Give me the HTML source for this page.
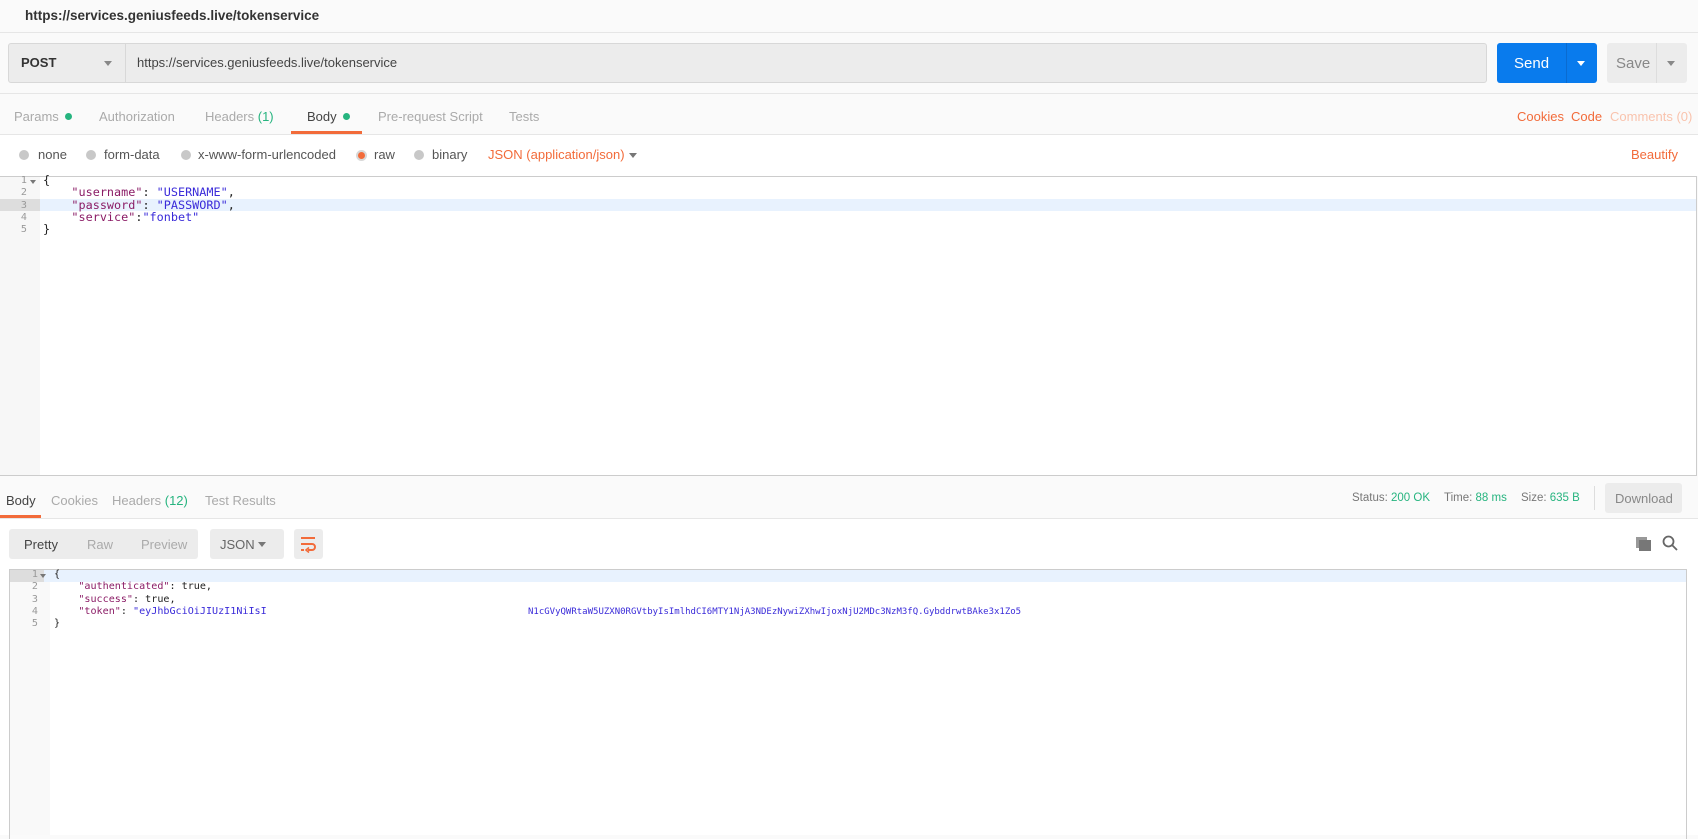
<!DOCTYPE html>
<html><head><meta charset="utf-8"><style>
*{box-sizing:border-box;margin:0;padding:0}
body{width:1698px;height:835px;overflow:hidden;background:#fafafa;font-family:"Liberation Sans",sans-serif;font-size:13px;color:#505050;position:relative}
.a{position:absolute;white-space:nowrap}
.mono{font-family:"DejaVu Sans Mono","Liberation Mono",monospace;font-size:10.1px;line-height:12.3px}
.m2{font-size:11.8px}
.k{color:#8b1c66}.s{color:#3a2bd9}
.dot{display:inline-block;width:7px;height:7px;border-radius:50%;background:#26b47f;margin-left:6px;vertical-align:1px}
.g{color:#26b47f}.o{color:#f26b3a}
.radio{position:absolute;width:10px;height:10px;border-radius:50%;background:#c8c8c8;top:150px}
</style></head><body>
<div class="a" style="left:0;top:0;width:1698px;height:33px;border-bottom:1px solid #e6e6e6;background:#fafafa"></div>
<div class="a" style="left:25px;top:8px;font-size:13.5px;color:#333;font-weight:bold">https://services.geniusfeeds.live/tokenservice</div>

<div class="a" style="left:8px;top:43px;width:1479px;height:40px;background:#ececec;border:1px solid #d8d8d8;border-radius:3px"></div>
<div class="a" style="left:125px;top:43px;width:1px;height:40px;background:#d8d8d8"></div>
<div class="a" style="left:21px;top:55px;color:#333;font-weight:bold">POST</div>
<div class="a" style="left:104px;top:61px;border-left:4px solid transparent;border-right:4px solid transparent;border-top:5px solid #888"></div>
<div class="a" style="left:137px;top:55px;color:#444">https://services.geniusfeeds.live/tokenservice</div>

<div class="a" style="left:1497px;top:43px;width:100px;height:40px;background:#097bed;border-radius:3px"></div>
<div class="a" style="left:1566px;top:43px;width:1px;height:40px;background:#0a6bd0"></div>
<div class="a" style="left:1514px;top:55px;color:#fff;font-size:15px">Send</div>
<div class="a" style="left:1577px;top:61px;border-left:4px solid transparent;border-right:4px solid transparent;border-top:5px solid #fff"></div>
<div class="a" style="left:1607px;top:43px;width:80px;height:40px;background:#ececec;border-radius:3px"></div>
<div class="a" style="left:1656px;top:43px;width:1px;height:40px;background:#ddd"></div>
<div class="a" style="left:1616px;top:55px;color:#888;font-size:15px">Save</div>
<div class="a" style="left:1667px;top:61px;border-left:4px solid transparent;border-right:4px solid transparent;border-top:5px solid #888"></div>

<div class="a" style="left:0;top:93px;width:1698px;height:1px;background:#e6e6e6"></div>
<div class="a" style="left:0;top:134px;width:1698px;height:1px;background:#e6e6e6"></div>
<div class="a" style="left:0;top:135px;width:1698px;height:41px;background:#fff"></div>
<div class="a" style="left:14px;top:109px;color:#aaa">Params<span class="dot"></span></div>
<div class="a" style="left:99px;top:109px;color:#aaa">Authorization</div>
<div class="a" style="left:205px;top:109px;color:#aaa">Headers <span class="g">(1)</span></div>
<div class="a" style="left:307px;top:109px;color:#444">Body<span class="dot"></span></div>
<div class="a" style="left:291px;top:131px;width:71px;height:3px;background:#f26b3a"></div>
<div class="a" style="left:378px;top:109px;color:#aaa">Pre-request Script</div>
<div class="a" style="left:509px;top:109px;color:#aaa">Tests</div>
<div class="a o" style="left:1517px;top:109px">Cookies</div>
<div class="a o" style="left:1571px;top:109px">Code</div>
<div class="a" style="left:1610px;top:109px;color:#f9c3ad">Comments (0)</div>

<div class="radio" style="left:19px"></div><div class="a" style="left:38px;top:147px;color:#555">none</div>
<div class="radio" style="left:86px"></div><div class="a" style="left:104px;top:147px;color:#555">form-data</div>
<div class="radio" style="left:181px"></div><div class="a" style="left:198px;top:147px;color:#555">x-www-form-urlencoded</div>
<div class="radio" style="left:356px;width:11px;height:11px;background:#f26b3a;border:2px solid #d8d8d8"></div><div class="a" style="left:374px;top:147px;color:#555">raw</div>
<div class="radio" style="left:414px"></div><div class="a" style="left:432px;top:147px;color:#555">binary</div>
<div class="a o" style="left:488px;top:147px">JSON (application/json)</div>
<div class="a" style="left:629px;top:153px;border-left:4px solid transparent;border-right:4px solid transparent;border-top:5px solid #777"></div>
<div class="a o" style="left:1631px;top:147px">Beautify</div>

<!-- request editor -->
<div class="a" style="left:0;top:176px;width:1697px;height:300px;background:#fff;border:1px solid #ccc;border-left:none"></div>
<div class="a" style="left:0;top:177px;width:40px;height:298px;background:#f7f7f7"></div>
<div class="a" style="left:0;top:199px;width:40px;height:12px;background:#ddd"></div>
<div class="a" style="left:40px;top:199px;width:1656px;height:12px;background:#e8f2fe"></div>
<div class="a mono" style="left:0;top:175px;width:27px;text-align:right;color:#999">1<br>2<br>3<br>4<br>5</div>
<div class="a" style="left:30px;top:180px;border-left:3px solid transparent;border-right:3px solid transparent;border-top:4px solid #777"></div>
<div class="a mono m2" style="left:43px;top:174px;color:#222">{<br>&nbsp;&nbsp;&nbsp;&nbsp;<span class="k">"username"</span>: <span class="s">"USERNAME"</span>,<br>&nbsp;&nbsp;&nbsp;&nbsp;<span class="k">"password"</span>: <span class="s">"PASSWORD"</span>,<br>&nbsp;&nbsp;&nbsp;&nbsp;<span class="k">"service"</span>:<span class="s">"fonbet"</span><br>}</div>

<!-- response tabs -->
<div class="a" style="left:0;top:518px;width:1698px;height:1px;background:#e6e6e6"></div>
<div class="a" style="left:6px;top:493px;color:#444">Body</div>
<div class="a" style="left:0;top:515px;width:41px;height:3px;background:#f26b3a"></div>
<div class="a" style="left:51px;top:493px;color:#aaa">Cookies</div>
<div class="a" style="left:112px;top:493px;color:#aaa">Headers <span class="g">(12)</span></div>
<div class="a" style="left:205px;top:493px;color:#aaa">Test Results</div>
<div class="a" style="left:1352px;top:492px;font-size:11.5px;color:#777">Status: <span class="g">200 OK</span></div>
<div class="a" style="left:1444px;top:492px;font-size:11.5px;color:#777">Time: <span class="g">88 ms</span></div>
<div class="a" style="left:1521px;top:492px;font-size:11.5px;color:#777">Size: <span class="g">635 B</span></div>
<div class="a" style="left:1594px;top:486px;width:1px;height:24px;background:#ddd"></div>
<div class="a" style="left:1605px;top:483px;width:77px;height:30px;background:#ececec;border-radius:3px"></div>
<div class="a" style="left:1615px;top:491px;color:#888">Download</div>

<div class="a" style="left:0;top:519px;width:1698px;height:316px;background:#fff"></div>
<div class="a" style="left:9px;top:529px;width:189px;height:30px;background:#ececec;border-radius:3px"></div>
<div class="a" style="left:24px;top:537px;color:#444">Pretty</div>
<div class="a" style="left:87px;top:537px;color:#aaa">Raw</div>
<div class="a" style="left:141px;top:537px;color:#aaa">Preview</div>
<div class="a" style="left:210px;top:529px;width:74px;height:30px;background:#ececec;border-radius:3px"></div>
<div class="a" style="left:220px;top:537px;color:#666">JSON</div>
<div class="a" style="left:258px;top:542px;border-left:4px solid transparent;border-right:4px solid transparent;border-top:5px solid #777"></div>
<div class="a" style="left:294px;top:529px;width:29px;height:30px;background:#ececec;border-radius:3px"></div>
<svg class="a" style="left:300px;top:535px" width="16" height="18" viewBox="0 0 16 18"><path d="M1 3h14M1 9h11a3 3 0 0 1 0 6H8M1 15h3" stroke="#f26b3a" stroke-width="2" fill="none"/><path d="M9 12.5l-3 2.5 3 2.5" stroke="#f26b3a" stroke-width="1.6" fill="none"/></svg>
<svg class="a" style="left:1636px;top:537px" width="15" height="14" viewBox="0 0 15 14"><rect x="0" y="0" width="11" height="11" fill="#999"/><rect x="3" y="3" width="12" height="11" fill="#777"/></svg>
<svg class="a" style="left:1662px;top:535px" width="16" height="16" viewBox="0 0 16 16"><circle cx="6.5" cy="6.5" r="5" stroke="#666" stroke-width="1.8" fill="none"/><path d="M10 10l5 5" stroke="#666" stroke-width="1.8"/></svg>

<!-- response editor -->
<div class="a" style="left:9px;top:569px;width:1678px;height:270px;border:1px solid #ccc;border-bottom:none"></div>
<div class="a" style="left:10px;top:570px;width:40px;height:265px;background:#f9f9f9"></div>
<div class="a" style="left:10px;top:570px;width:34px;height:12px;background:#ddd"></div>
<div class="a" style="left:44px;top:570px;width:1642px;height:12px;background:#e8f2fe"></div>
<div class="a mono" style="left:10px;top:569px;width:28px;text-align:right;color:#999">1<br>2<br>3<br>4<br>5</div>
<div class="a" style="left:40px;top:574px;border-left:3px solid transparent;border-right:3px solid transparent;border-top:4px solid #777"></div>
<div class="a mono" style="left:54px;top:569px;color:#222">{<br>&nbsp;&nbsp;&nbsp;&nbsp;<span class="k">"authenticated"</span>: true,<br>&nbsp;&nbsp;&nbsp;&nbsp;<span class="k">"success"</span>: true,<br>&nbsp;&nbsp;&nbsp;&nbsp;<span class="k">"token"</span>: <span class="s">"eyJhbGciOiJIUzI1NiIsI</span><br>}</div>
<div class="a mono s" style="left:528px;top:606px;font-size:9px">N1cGVyQWRtaW5UZXN0RGVtbyIsImlhdCI6MTY1NjA3NDEzNywiZXhwIjoxNjU2MDc3NzM3fQ.GybddrwtBAke3x1Zo5</div>
</body></html>
